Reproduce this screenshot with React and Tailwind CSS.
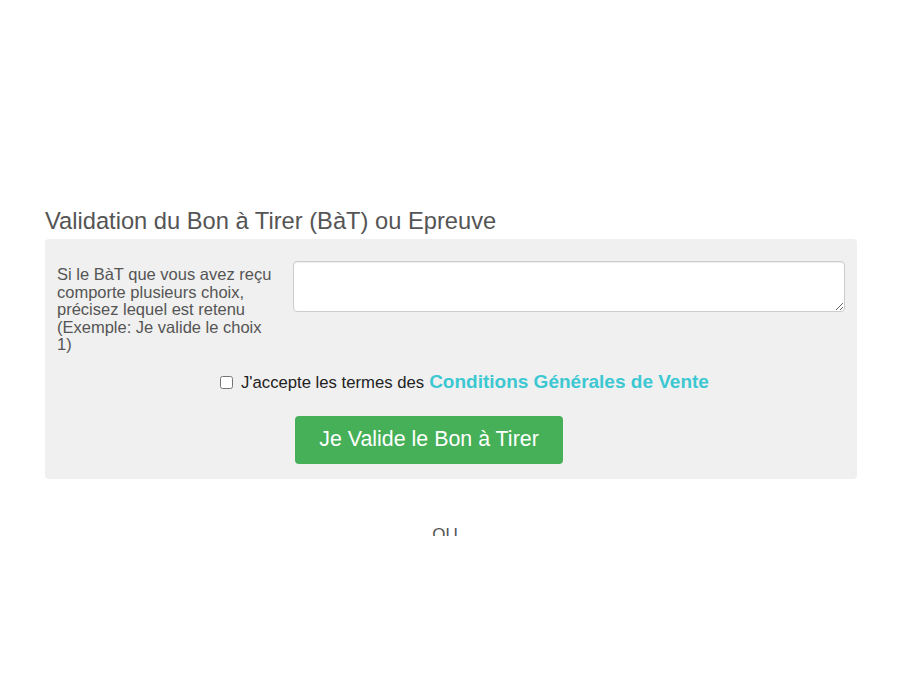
import React from 'react';

export default function App() {
  return (
    <div className="w-[900px] h-[700px] bg-white" style={{ fontFamily: '"Liberation Sans", Arial, sans-serif' }}>
      {/* Visible part of the page, cut off at the bottom like the capture */}
      <div className="h-[536px] overflow-hidden pt-[206px] pl-[45px] pr-[43px]">
        <h2 className="text-[23.7px] leading-[30px] text-[#555555] mb-[3px]">
          Validation du Bon à Tirer (BàT) ou Epreuve
        </h2>

        <div className="bg-[#f0f0f0] rounded-[4px] pt-[22px] pb-[15px] px-[12px]">
          <div className="flex gap-[16px]">
            <label className="w-[220px] shrink-0 text-[16.5px] leading-[17.5px] text-[#555555] pt-[5px] pr-[4px]">
              Si le BàT que vous avez reçu comporte plusieurs choix, précisez lequel est retenu (Exemple: Je valide le choix 1)
            </label>
            <textarea className="flex-1 h-[51px] bg-white border border-[#cccccc] rounded-[4px] shadow-[inset_0_1px_1px_rgba(0,0,0,0.075)]" />
          </div>

          <div className="flex items-center h-[22px] pl-[163px] mt-[18px]">
            <input type="checkbox" className="w-[13px] h-[13px] m-0 mr-[8px]" />
            <span className="text-[16.7px] text-[#222222]">J'accepte les termes des</span>
            <a className="ml-[5px] text-[19px] font-bold text-[#3cc8d2]">Conditions Générales de Vente</a>
          </div>

          <button className="ml-[238px] mt-[22px] w-[268px] h-[48px] bg-[#45b058] rounded-[4px] text-white text-[21.4px]">
            Je Valide le Bon à Tirer
          </button>
        </div>

        {/* The capture ends partway through this line */}
        <div className="text-center text-[17px] leading-[20px] text-[#555555] mt-[46px] pr-[12px]">OU</div>
      </div>
    </div>
  );
}
